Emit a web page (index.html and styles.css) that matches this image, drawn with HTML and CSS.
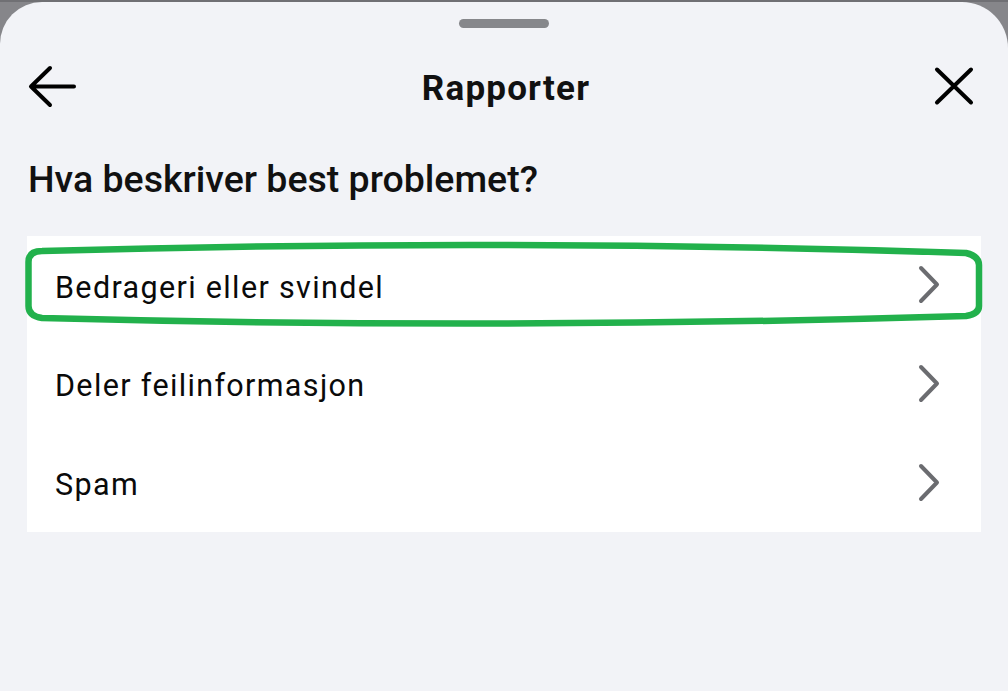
FILE: index.html
```html
<!DOCTYPE html>
<html lang="no">
<head>
<meta charset="utf-8">
<title>Rapporter</title>
<link rel="stylesheet" href="styles.css">
</head>
<body>
<div class="backdrop">
  <div class="sheet">
    <div class="handle"></div>
    <header class="topbar">
      <button class="icon-btn back" aria-label="Tilbake">
        <svg width="52" height="44" viewBox="0 0 52 44"><path d="M48 22.5H7M24 4L5 22.5L24 41" fill="none" stroke="#000" stroke-width="4" stroke-linecap="round" stroke-linejoin="round"/></svg>
      </button>
      <h1 class="title">Rapporter</h1>
      <button class="icon-btn close" aria-label="Lukk">
        <svg width="40" height="40" viewBox="0 0 40 40"><path d="M3 3.5L37 36.5M37 3.5L3 36.5" fill="none" stroke="#000" stroke-width="4" stroke-linecap="round"/></svg>
      </button>
    </header>
    <h2 class="question">Hva beskriver best problemet?</h2>
    <div class="list-wrap">
      <ul class="options">
        <li class="option"><span class="label">Bedrageri eller svindel</span><svg class="chev" width="24" height="40" viewBox="0 0 24 40"><path d="M4 3L20 19.5L4 36" fill="none" stroke="#6b6c70" stroke-width="4" stroke-linecap="round" stroke-linejoin="round"/></svg></li>
        <li class="option"><span class="label">Deler feilinformasjon</span><svg class="chev" width="24" height="40" viewBox="0 0 24 40"><path d="M4 3L20 19.5L4 36" fill="none" stroke="#6b6c70" stroke-width="4" stroke-linecap="round" stroke-linejoin="round"/></svg></li>
        <li class="option"><span class="label">Spam</span><svg class="chev" width="24" height="40" viewBox="0 0 24 40"><path d="M4 3L20 19.5L4 36" fill="none" stroke="#6b6c70" stroke-width="4" stroke-linecap="round" stroke-linejoin="round"/></svg></li>
      </ul>
      <svg class="highlight" width="1008" height="120" viewBox="0 230 1008 120"><path d="M28.5,262 Q28.5,251 42,251 Q500,238 966,253 Q979,256 979,265 L979,306 Q979,314 966,316 Q500,330 42,318 Q28.5,316 28.5,306 Z" fill="none" stroke="#22b14c" stroke-width="6.5"/></svg>
    </div>
  </div>
</div>
</body>
</html>
```
FILE: styles.css
```css
* { box-sizing: border-box; }
html, body { margin: 0; padding: 0; height: 100%; }
body {
  font-family: Roboto, "Noto Sans", "Liberation Sans", sans-serif;
  color: #111;
  overflow: hidden;
}
.backdrop {
  height: 100%;
  background: #86868a;
  border-top: 2px solid #707074;
}
.sheet {
  height: 100%;
  background: #f2f3f7;
  border-radius: 42px 46px 0 0;
  display: flex;
  flex-direction: column;
}
.handle {
  width: 90px;
  height: 9px;
  border-radius: 5px;
  background: #86878b;
  margin: 17px auto 0;
}
.topbar {
  display: flex;
  align-items: center;
  justify-content: space-between;
  height: 78px;
  margin-top: 19px;
  padding: 0 34px 0 26px;
}
.icon-btn {
  background: none;
  border: 0;
  padding: 0;
  display: flex;
}
.icon-btn.back { width: 52px; }
.icon-btn.close { width: 40px; }
.title {
  margin: 0;
  padding-top: 4px;
  font-size: 35px;
  font-weight: 700;
  letter-spacing: 1.2px;
}
.question {
  margin: 0;
  padding: 30px 28px 0;
  font-size: 37.5px;
  font-weight: 500;
  letter-spacing: 0;
  line-height: 48px;
  height: 111px;
}
.list-wrap {
  position: relative;
}
.options {
  list-style: none;
  margin: 0 27px;
  padding: 0;
  background: #fff;
}
.option {
  height: 98.67px;
  display: flex;
  align-items: center;
  justify-content: space-between;
  padding: 0 40px 0 28px;
  font-size: 30.5px;
  font-weight: 400;
  letter-spacing: 1.35px;
  color: #0a0a0a;
}
.label { padding-top: 4px; }
.chev { flex: none; }
.highlight {
  position: absolute;
  left: 0;
  top: -6px;
  pointer-events: none;
}
```
